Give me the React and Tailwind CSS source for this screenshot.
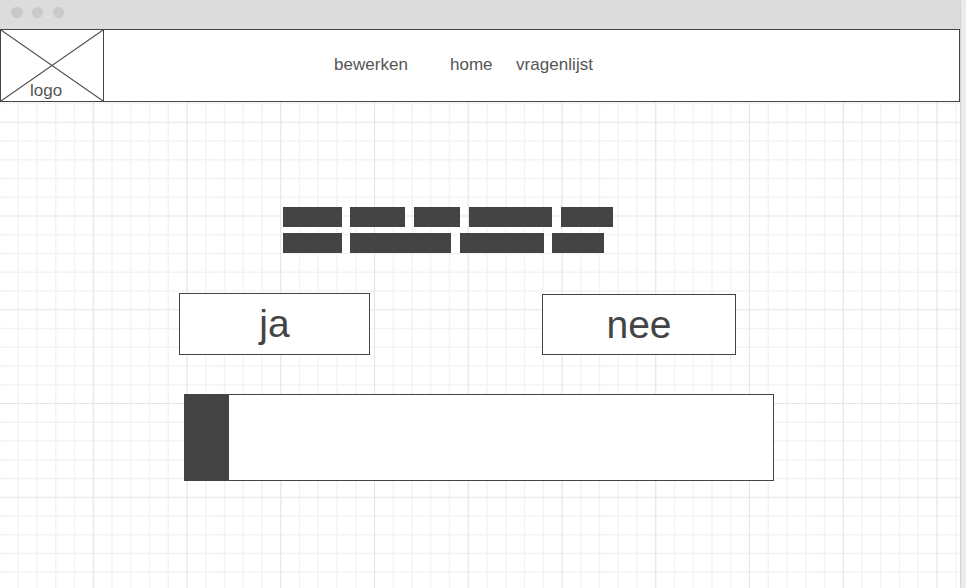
const CELL = 18.75;
const OFFSET = -0.5;
const columns = Array.from({ length: 52 }, (_, i) => i);
const rows = Array.from({ length: 30 }, (_, i) => i);

const placeholderRows = [
  ["w-[59px]", "ml-2 w-[55px]", "ml-[9px] w-[46px]", "ml-[9px] w-[83px]", "ml-[9px] w-[52px]"],
  ["w-[59px]", "ml-2 w-[101px]", "ml-[9px] w-[84px]", "ml-2 w-[52px]"],
];

function GridPaper() {
  const lines = (major) => (
    <g stroke={major ? "#e5e5e5" : "#f3f3f3"} strokeWidth={major ? 1.2 : 1.4}>
      {columns
        .filter((i) => (i % 5 === 0) === major)
        .map((i) => (
          <line key={`c${i}`} x1={i * CELL + OFFSET} x2={i * CELL + OFFSET} y1="0" y2="559" />
        ))}
      {rows
        .filter((i) => (i % 5 === 0) === major)
        .map((i) => (
          <line key={`r${i}`} x1="0" x2="961" y1={i * CELL + OFFSET} y2={i * CELL + OFFSET} />
        ))}
    </g>
  );
  return (
    <svg className="absolute inset-0" width="961" height="559" aria-hidden="true">
      {lines(false)}
      {lines(true)}
    </svg>
  );
}

function Header() {
  return (
    <header className="relative flex h-[73px] w-[960px] border border-[#444] bg-white text-[17px] leading-5 text-[#555]">
      <div className="relative -my-px -ml-px flex h-[73px] w-[104px] items-end border border-[#444]">
        <svg className="absolute inset-0" width="102" height="71" stroke="#505050" strokeWidth="1.1">
          <path d="M0 0L102 71M102 0L0 71" />
        </svg>
        <span className="relative ml-[29px]">logo</span>
      </div>
      <nav className="flex pt-[25px]">
        <a className="ml-[230px] w-[116px] tracking-[0.05px]">bewerken</a>
        <a className="w-[66px]">home</a>
        <a className="tracking-[0.05px]">vragenlijst</a>
      </nav>
    </header>
  );
}

export default function App() {
  return (
    <div className="flex h-[588px] w-[966px] overflow-hidden bg-[#ececec] font-['Liberation_Sans',Arial,sans-serif] text-[#444]">
      <div className="h-full w-[960px] shrink-0 bg-white shadow-[0_0_2px_rgba(0,0,0,0.28)]">
        <div className="flex h-[29px] items-start bg-[#dcdcdc] pt-[7px] pl-[11px]">
          <span className="h-[11px] w-3 rounded-full bg-[#c9c9c9]" />
          <span className="ml-[9px] size-[11px] rounded-full bg-[#c9c9c9]" />
          <span className="ml-[10px] size-[11px] rounded-full bg-[#c9c9c9]" />
        </div>
        <div className="relative h-[559px] overflow-hidden">
          <GridPaper />
          <Header />
          <main className="relative pt-[105px]">
            <div className="ml-[283px] flex flex-col gap-1.5">
              {placeholderRows.map((row, r) => (
                <div key={r} className="flex">
                  {row.map((size, i) => (
                    <span key={i} className={`h-5 bg-[#444] ${size}`} />
                  ))}
                </div>
              ))}
            </div>
            <div className="mt-10 ml-[179px] flex items-end gap-[172px] text-[39px] leading-10">
              <button className="flex h-[62px] w-[191px] items-center justify-center border border-[#444] bg-white">ja</button>
              <button className="flex h-[61px] w-[194px] items-center justify-center border border-[#444] bg-white">nee</button>
            </div>
            <div className="mt-[39px] ml-[184px] h-[87px] w-[590px] border border-[#444] bg-white">
              <div className="h-full w-11 bg-[#444]" />
            </div>
          </main>
        </div>
      </div>
    </div>
  );
}
